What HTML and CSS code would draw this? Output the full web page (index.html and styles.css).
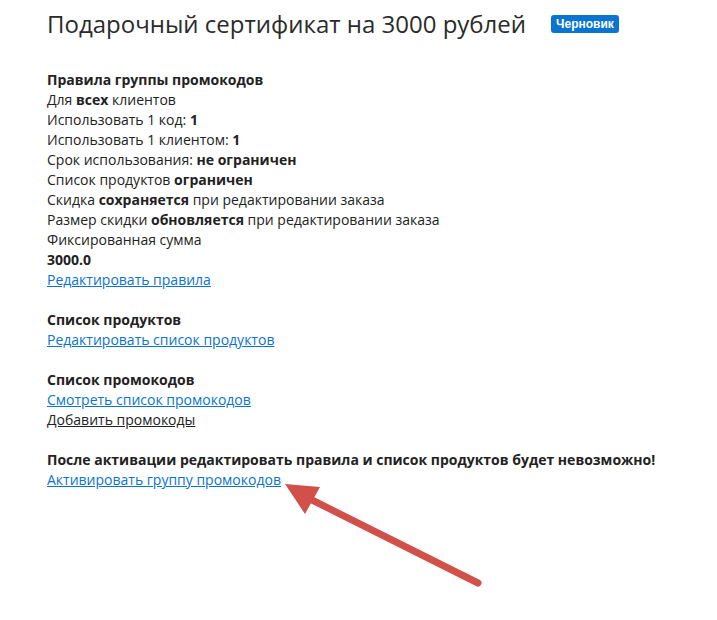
FILE: index.html
```html
<!DOCTYPE html>
<html lang="ru">
<head>
    <meta charset="UTF-8">
    <meta name="viewport" content="width=device-width, initial-scale=1.0">
    <title>Подарочный сертификат на 3000 рублей</title>
    <link rel="stylesheet" href="styles.css">
</head>
<body>
    <div class="page">
        <header class="head">
            <h1>Подарочный сертификат на 3000 рублей</h1>
            <span class="badge">Черновик</span>
        </header>

        <section class="block">
            <div class="block-title">Правила группы промокодов</div>
            <div>Для <b>всех</b> клиентов</div>
            <div>Использовать 1 код: <b>1</b></div>
            <div>Использовать 1 клиентом: <b>1</b></div>
            <div>Срок использования: <b>не ограничен</b></div>
            <div>Список продуктов <b>ограничен</b></div>
            <div>Скидка <b>сохраняется</b> при редактировании заказа</div>
            <div>Размер скидки <b>обновляется</b> при редактировании заказа</div>
            <div>Фиксированная сумма</div>
            <div><b>3000.0</b></div>
            <a href="#">Редактировать правила</a>
        </section>

        <section class="block">
            <div class="block-title">Список продуктов</div>
            <a href="#">Редактировать список продуктов</a>
        </section>

        <section class="block">
            <div class="block-title">Список промокодов</div>
            <a href="#">Смотреть список промокодов</a>
            <a href="#" class="visited">Добавить промокоды</a>
        </section>

        <section class="block">
            <div class="block-title">После активации редактировать правила и список продуктов будет невозможно!</div>
            <a href="#">Активировать группу промокодов</a>
        </section>
    </div>

    <!-- annotation arrow -->
    <svg class="arrow" width="717" height="620" viewBox="0 0 717 620">
        <line x1="478" y1="583" x2="304" y2="496" stroke="#d1514a" stroke-width="7" stroke-linecap="round"/>
        <polygon points="285,484 320,487 305,514" fill="#d1514a"/>
    </svg>
</body>
</html>
```

FILE: styles.css
```css
/* CSS styles */
body {
    font-family: "Open Sans", Arial, sans-serif;
    font-size: 14px;
    line-height: 20px;
    color: #222;
    background-color: #fff;
    margin: 0;
    padding: 0;
}

.page {
    padding: 6px 0 0 47px;
}

.head {
    display: flex;
    align-items: center;
    gap: 25px;
    margin-bottom: 28px;
}

.head h1 {
    margin: 0;
    font-size: 24px;
    font-weight: 400;
    line-height: 36px;
    color: #2b2b2b;
}

.badge {
    font-family: "Liberation Sans", Arial, sans-serif;
    font-size: 12px;
    font-weight: bold;
    line-height: 14px;
    color: #fff;
    background-color: #0a74d0;
    padding: 2px 5px;
    border-radius: 3px;
}

.block {
    display: flex;
    flex-direction: column;
    align-items: flex-start;
    margin-bottom: 20px;
}

.block-title {
    font-weight: bold;
}

b {
    font-weight: bold;
}

a {
    color: #0a74d0;
    text-decoration: underline;
}

a.visited {
    color: #222;
}

.arrow {
    position: absolute;
    left: 0;
    top: 0;
    pointer-events: none;
}
```
